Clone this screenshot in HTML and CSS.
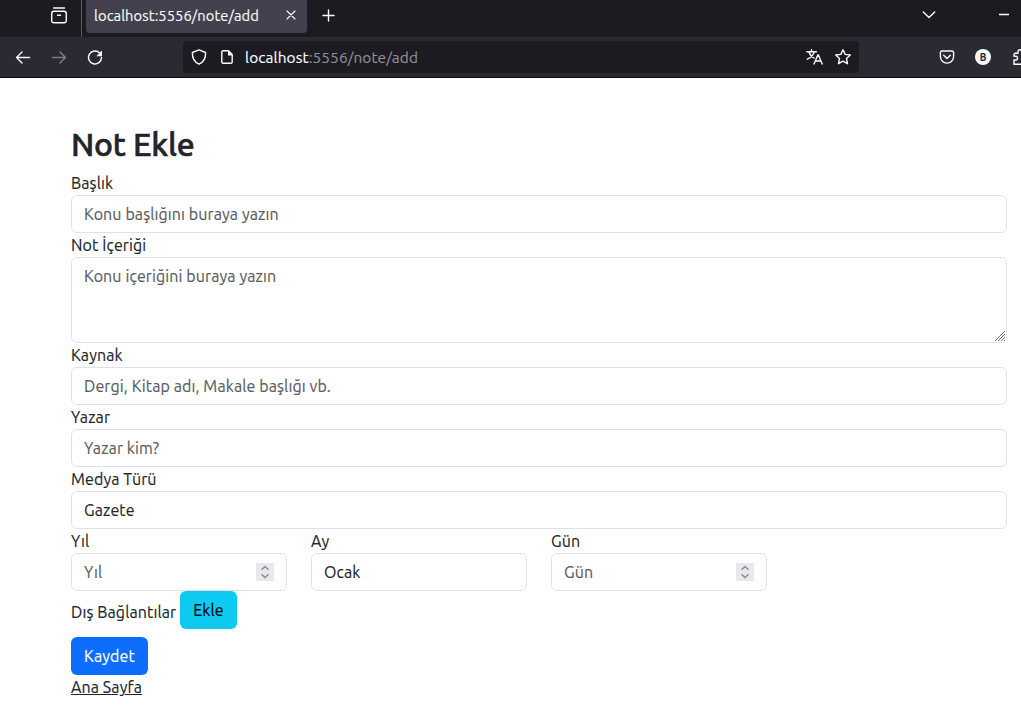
FILE: index.html
```html
<!DOCTYPE html>
<html lang="tr">
<head>
<meta charset="utf-8">
<title>Not Ekle</title>
<link rel="stylesheet" href="styles.css">
</head>
<body>
<header class="browser">
  <div class="tabbar">
    <div class="view">
      <svg class="icon view-icon" width="18" height="18" viewBox="0 0 18 18"><path d="M3.500 2h11"/><rect x="1.700" y="5.200" width="14.600" height="11.600" rx="2.200"/><path d="M7.500 9.300h3"/></svg>
    </div>
    <div class="tab"><span class="tab-title">localhost:5556/note/add</span>
      <svg class="icon thin" width="10" height="10" viewBox="0 0 10 10"><path d="M1 1l8 8M9 1L1 9"/></svg>
    </div>
    <svg class="icon plus" width="14" height="14" viewBox="0 0 14 14"><path d="M6.500 1v11M1 6.500h11"/></svg>
    <svg class="icon chevron" width="14" height="10" viewBox="0 0 14 10"><path d="M1.300 2L7 7.600 12.700 2"/></svg>
    <svg class="icon minimize" width="10" height="4" viewBox="0 0 10 4"><path d="M0 2.500h10"/></svg>
  </div>
  <div class="navbar">
    <svg class="icon nav-icon" width="16" height="16" viewBox="0 0 16 16"><path d="M14.500 8.500H1.500M7 3L1.500 8.500 7 14"/></svg>
    <svg class="icon nav-icon dim" width="16" height="16" viewBox="0 0 16 16"><path d="M1.500 8.500h13M9 3l5.500 5.500L9 14"/></svg>
    <svg class="icon nav-icon" width="16" height="16" viewBox="0 0 16 16"><path d="M12.800 4.100A6.500 6.500 0 1 0 14.500 8.500"/><path class="solid" d="M15 1.500v5.700H9.300z"/></svg>
    <div class="urlbar">
      <svg class="icon" width="16" height="16" viewBox="0 0 16 16"><path d="M8 .9l6.600 2.600c.3 5.200-1.600 9.300-6.600 11.700C3 12.800 1.100 8.700 1.400 3.500z"/></svg>
      <svg class="icon page-icon" width="12" height="14" viewBox="0 0 12 14"><path d="M7.500.8H2A1.200 1.200 0 0 0 .8 2v10A1.200 1.200 0 0 0 2 13.200h8A1.200 1.200 0 0 0 11.200 12V4.500z"/><path class="solid" d="M7 .8l4.700 4.700H7z"/></svg>
      <span class="url"><b class="host">localhost</b>:5556/note/add</span>
      <svg class="icon translate" width="17" height="16" viewBox="0 0 17 16"><path d="M.8 2.700h9.700M5.500.7v2M8.300 2.700C7.500 6 5 8.600 1.300 10.200M3 2.700c.8 3 2.600 5 5 6.300M8 15l3.800-9h.6L16.200 15M9.300 12h5.600"/></svg>
      <svg class="icon star" width="18" height="18" viewBox="0 0 18 18"><path d="M9 1.700l2.200 4.700 5.100.6-3.800 3.500 1 5.200L9 13.200l-4.500 2.500 1-5.200L1.700 7l5.100-.6z"/></svg>
    </div>
    <svg class="icon pocket" width="16" height="16" viewBox="0 0 16 16"><path d="M2.800 2h10.400a1.400 1.400 0 0 1 1.400 1.400V7.500a6.600 6.600 0 0 1-13.200 0V3.400A1.400 1.400 0 0 1 2.800 2zM4.700 6.300L8 9.500l3.300-3.200"/></svg>
    <span class="avatar">B</span>
    <svg class="icon puzzle" width="16" height="16" viewBox="0 0 16 16"><path d="M1 15.300V11h1.700a1.800 1.800 0 0 0 0-3.700H1V5.500A1.200 1.200 0 0 1 2.200 4.300H5V2.700a1.900 1.900 0 0 1 3.800 0v1.600H12v11z"/></svg>
  </div>
</header>
<main class="page">
  <h1 class="title">Not Ekle</h1>
  <form class="form">
    <label class="label" for="baslik">Başlık</label>
    <input class="control" id="baslik" placeholder="Konu başlığını buraya yazın">
    <label class="label" for="icerik">Not İçeriği</label>
    <div class="area-wrap">
      <textarea class="control area" id="icerik" placeholder="Konu içeriğini buraya yazın"></textarea>
      <svg class="grip" width="12" height="12" viewBox="0 0 12 12"><path d="M1 11L11 1M4 11l7-7M7 11l4-4M10 11l1-1"/></svg>
    </div>
    <label class="label" for="kaynak">Kaynak</label>
    <input class="control" id="kaynak" placeholder="Dergi, Kitap adı, Makale başlığı vb.">
    <label class="label" for="yazar">Yazar</label>
    <input class="control" id="yazar" placeholder="Yazar kim?">
    <label class="label" for="medya">Medya Türü</label>
    <select class="control" id="medya"><option>Gazete</option></select>
    <div class="date-row">
      <div class="field"><label class="label" for="yil">Yıl</label>
        <div class="control number"><input class="number-input" id="yil" placeholder="Yıl">
          <svg class="spinner" width="18" height="18" viewBox="0 0 18 18"><path d="M5.500 6.800L9 3.600l3.500 3.200M5.500 11.400L9 14.600l3.500-3.200"/></svg></div></div>
      <div class="field"><label class="label" for="ay">Ay</label>
        <select class="control" id="ay"><option>Ocak</option></select></div>
      <div class="field"><label class="label" for="gun">Gün</label>
        <div class="control number"><input class="number-input" id="gun" placeholder="Gün">
          <svg class="spinner" width="18" height="18" viewBox="0 0 18 18"><path d="M5.500 6.800L9 3.600l3.500 3.200M5.500 11.400L9 14.600l3.500-3.200"/></svg></div></div>
    </div>
    <div class="links-row"><span class="links-label">Dış Bağlantılar</span><button class="btn info" type="button">Ekle</button></div>
    <button class="btn primary" type="button">Kaydet</button>
  </form>
  <a class="home" href="#">Ana Sayfa</a>
</main>
</body>
</html>
```
FILE: styles.css
```css
* { box-sizing: border-box; }
body {
  margin: 0;
  width: 1021px;
  height: 713px;
  overflow: hidden;
  background: #fff;
  color: #212529;
  font: 16px/24px "Ubuntu", "Noto Sans", sans-serif;
  letter-spacing: 0.11px;
  -webkit-text-stroke: 0.15px;
}
.icon {
  display: block;
  flex: none;
  fill: none;
  stroke: #fbfbfe;
  stroke-width: 1.4;
  stroke-linecap: round;
  stroke-linejoin: round;
}
.icon .solid { fill: #fbfbfe; stroke: none; }
.thin { stroke-width: 1.1; }
.dim { opacity: .4; }
.browser { border-bottom: 1px solid #0c0c0d; }
.tabbar { display: flex; height: 37px; background: #1c1b22; overflow: hidden; }
.view { width: 82px; border-right: 1px solid #5b5b63; padding: 6px 0 0 50px; }
.tab {
  display: flex;
  align-items: center;
  justify-content: space-between;
  width: 221px;
  height: 36px;
  margin: -3px 0 0 4px;
  padding: 2px 11px 0 8px;
  border-radius: 4px;
  background: #42414d;
  color: #fbfbfe;
}
.tab-title { font-size: 14.667px; }
.tab .icon { margin-top: -2px; }
.plus { margin: 9px 0 0 15px; }
.chevron { margin: 10px 0 0 auto; }
.minimize { margin: 12px 12px 0 63px; }
.navbar {
  display: flex;
  align-items: center;
  height: 40px;
  padding-left: 15px;
  background: #2b2a33;
  overflow: hidden;
}
.nav-icon { margin-right: 20px; }
.urlbar {
  display: flex;
  flex: none;
  align-items: center;
  width: 676px;
  height: 32px;
  margin-left: 60px;
  padding: 0 7px 0 8px;
  border-radius: 4px;
  background: #1c1b22;
}
.page-icon { margin-left: 14px; }
.url { margin-left: 12px; padding-top: 1px; color: #8f8f98; font-size: 15.4px; }
.host { color: #fbfbfe; font-weight: 400; }
.translate { margin-left: auto; }
.star { margin-left: 11px; }
.pocket { margin-left: 80px; }
.avatar {
  flex: none;
  width: 16px;
  height: 16px;
  margin-left: 20px;
  border-radius: 50%;
  background: #fbfbfe;
  color: #2b2a33;
  font-size: 10px;
  font-weight: 700;
  line-height: 17px;
  text-align: center;
}
.puzzle { margin-left: 22px; }
.page { padding: 47px 14px 0 71px; }
.title {
  height: 38px;
  margin: 0 0 8px;
  font-size: 32px;
  font-weight: 500;
  line-height: 39px;
  letter-spacing: -0.2px;
  -webkit-text-stroke: 0.6px;
}
.form { display: flex; flex-direction: column; align-items: flex-start; }
.label { display: block; height: 24px; }
.control {
  display: block;
  width: 100%;
  height: 38px;
  margin: 0;
  padding: 6px 12px;
  border: 1px solid #dee2e6;
  border-radius: 6px;
  background: #fff;
  color: #212529;
  font: inherit;
  letter-spacing: inherit;
  appearance: none;
}
.control::placeholder, .number-input::placeholder { color: #595c5f; opacity: 1; }
.area-wrap { position: relative; width: 100%; }
.area { height: 86px; resize: none; }
.grip {
  position: absolute;
  right: 1px;
  bottom: 1px;
  fill: none;
  stroke: #6b6b6b;
  stroke-width: 1;
}
.date-row { display: flex; gap: 24px; }
.field { width: 216px; }
.number { display: flex; align-items: center; }
.number-input {
  flex: 1;
  min-width: 0;
  padding: 0;
  border: 0;
  outline: 0;
  font: inherit;
  letter-spacing: inherit;
}
.spinner { flex: none; background: #e9e9ed; fill: none; stroke: #8f8f9d; stroke-width: 1.5; }
.links-row { display: flex; height: 46px; }
.links-label { width: 109px; padding-top: 9px; white-space: nowrap; }
.btn {
  height: 38px;
  padding: 6px 0;
  border: 0;
  border-radius: 6px;
  font: inherit;
  letter-spacing: inherit;
}
.info { width: 57px; background: #0dcaf0; color: #000; }
.primary { width: 77px; background: #0d6efd; color: #fff; }
.home { color: #212529; }
```
